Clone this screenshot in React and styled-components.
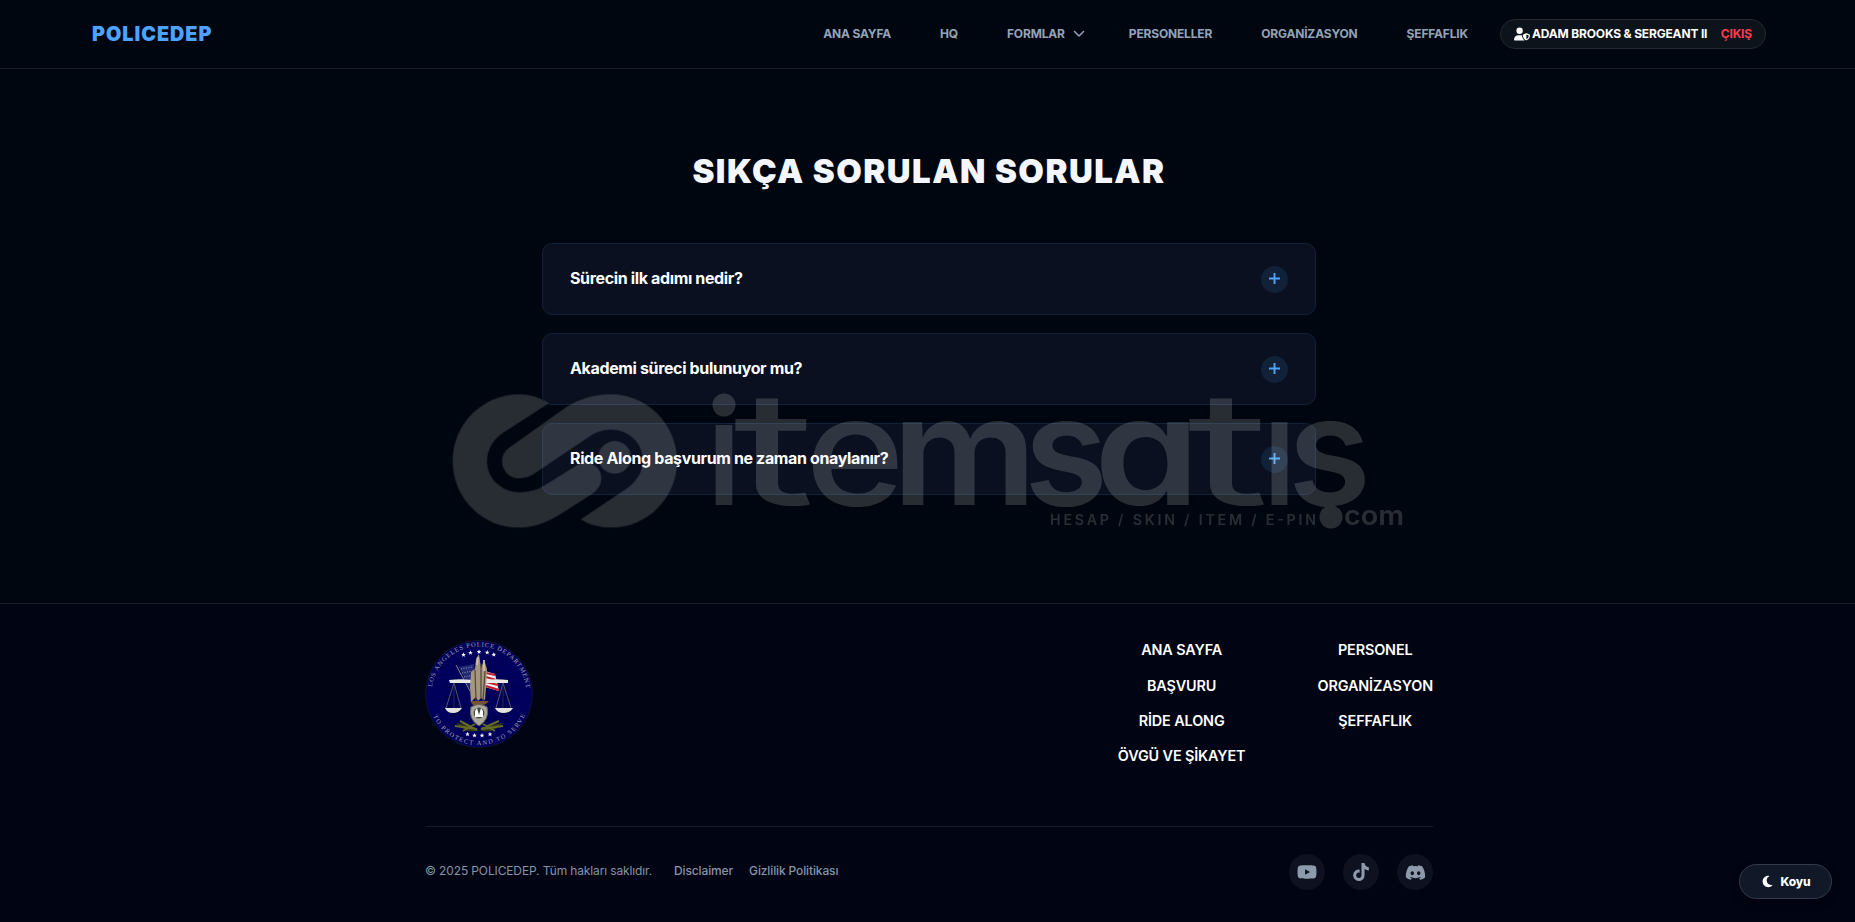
import React, { Component } from "react";
import styled, { createGlobalStyle } from "styled-components";
import {
    FaUserShield,
    FaChevronDown,
    FaYoutube,
    FaTiktok,
    FaDiscord,
    FaMoon,
} from "react-icons/fa6";

const customColors = {
    page: "#00060f",
    footer: "#000413",
    card: "#0a101f",
    blue: "#4da3ff",
    muted: "#94a3b8",
    red: "#ff3b4e",
    line: "#1a1d25",
};

const GlobalStyle = createGlobalStyle`
    * {
        box-sizing: border-box;
    }

    body {
        margin: 0;
        background: ${customColors.page};
        font-family: Inter, "Liberation Sans", sans-serif;
        overflow: hidden;
    }

    a {
        color: inherit;
        text-decoration: none;
    }
`;

const Page = styled.div`
    position: relative;
    width: 1855px;
    height: 922px;
    display: flex;
    flex-direction: column;
    overflow: hidden;
`;

const Header = styled.header`
    height: 69px;
    flex: none;
    display: flex;
    align-items: center;
    justify-content: space-between;
    padding: 0 89px 0 92px;
    border-bottom: 1px solid ${customColors.line};
`;

const Brand = styled.a`
    color: ${customColors.blue};
    font-size: 19.8px;
    font-weight: 900;
    letter-spacing: 0.98px;
    line-height: 24px;
    margin-bottom: 1px;
`;

const Nav = styled.nav`
    display: flex;
    align-items: center;
    color: ${customColors.muted};
    font-size: 12px;
    font-weight: 700;
    letter-spacing: -0.17px;
`;

const NavLink = styled.a`
    display: flex;
    align-items: center;
    gap: 8px;
    white-space: nowrap;
    padding-bottom: 2px;
    margin-right: ${(props) => props.$space || "49px"};
`;

const UserPill = styled.div`
    height: 30px;
    width: 266px;
    display: flex;
    align-items: center;
    justify-content: space-between;
    padding: 0 13px 1px;
    border: 1px solid #24282f;
    border-radius: 15px;
    background: #0d131b;
    color: white;
    white-space: nowrap;
`;

const UserName = styled.span`
    display: flex;
    align-items: center;
    gap: 2px;
`;

const Logout = styled.a`
    color: ${customColors.red};
`;

const Main = styled.main`
    height: 534px;
    flex: none;
    display: flex;
    flex-direction: column;
    align-items: center;
    padding: 82px 0 0 3px;
`;

const Title = styled.h1`
    margin: 0 0 52px;
    color: #f3f6fc;
    font-size: 33px;
    font-weight: 900;
    line-height: 40px;
    letter-spacing: 1.48px;
`;

const QuestionList = styled.div`
    width: 774px;
    display: flex;
    flex-direction: column;
    gap: 18px;
`;

const Question = styled.button`
    height: 72px;
    display: flex;
    align-items: center;
    justify-content: space-between;
    padding: 0 27px;
    border: 1px solid #10213a;
    border-radius: 10px;
    background: ${customColors.card};
    color: white;
    font-family: inherit;
    font-size: 16px;
    font-weight: 700;
    letter-spacing: -0.36px;
    cursor: pointer;
`;

const QuestionText = styled.span`
    padding-bottom: 2px;
`;

const Plus = styled.span`
    width: 27px;
    height: 27px;
    display: flex;
    align-items: center;
    justify-content: center;
    padding-bottom: 2px;
    border-radius: 50%;
    background: #102138;
`;

const Footer = styled.footer`
    flex: 1;
    display: flex;
    flex-direction: column;
    align-items: center;
    padding-left: 3px;
    border-top: 1px solid ${customColors.line};
    background: ${customColors.footer};
`;

const FooterTop = styled.div`
    width: 1008px;
    height: 222px;
    padding-top: 36px;
    display: flex;
    justify-content: space-between;
`;

const FooterColumns = styled.div`
    display: flex;
    gap: 72px;
    padding-top: 1.3px;
`;

const FooterColumn = styled.div`
    display: flex;
    flex-direction: column;
    align-items: center;
    gap: 18px;
    color: white;
    font-size: 14.4px;
    font-weight: 600;
    line-height: 17.3px;
    letter-spacing: -0.12px;
`;

const FooterBottom = styled.div`
    width: 1008px;
    padding-top: 27px;
    display: flex;
    align-items: center;
    justify-content: space-between;
    border-top: 1px solid #171a29;
`;

const Legal = styled.div`
    display: flex;
    color: #8594a8;
    font-size: 12px;
    line-height: 15px;
    letter-spacing: -0.13px;
    padding-bottom: 4px;
`;

const Copyright = styled.span`
    margin-right: 22px;
`;

const LegalLink = styled.a`
    margin-right: 16px;
    font-weight: 500;
`;

const Socials = styled.div`
    display: flex;
    gap: 18px;
`;

const SocialLink = styled.a`
    width: 36px;
    height: 36px;
    display: flex;
    align-items: center;
    justify-content: center;
    border-radius: 50%;
    background: #0e1120;
    color: #8c9aab;
`;

const ThemeButton = styled.button`
    position: absolute;
    right: 23px;
    bottom: 23px;
    width: 93px;
    height: 35px;
    display: flex;
    align-items: center;
    justify-content: center;
    gap: 7px;
    border: 1px solid #333c4a;
    border-radius: 18px;
    background: #111827;
    color: white;
    font-family: inherit;
    font-size: 12px;
    font-weight: 800;
    letter-spacing: -0.2px;
    box-shadow: 0 4px 10px rgba(0, 0, 0, 0.3);
`;

const WatermarkLayer = styled.svg`
    position: absolute;
    left: 440px;
    top: 320px;
    pointer-events: none;
`;

const navLinks = [
    { label: "ANA SAYFA" },
    { label: "HQ" },
    { label: "FORMLAR", menu: true, space: "44px" },
    { label: "PERSONELLER" },
    { label: "ORGANİZASYON" },
    { label: "ŞEFFAFLIK", space: "32px" },
];

const questions = [
    "Sürecin ilk adımı nedir?",
    "Akademi süreci bulunuyor mu?",
    "Ride Along başvurum ne zaman onaylanır?",
];

const footerLinks = [
    ["ANA SAYFA", "BAŞVURU", "RİDE ALONG", "ÖVGÜ VE ŞİKAYET"],
    ["PERSONEL", "ORGANİZASYON", "ŞEFFAFLIK"],
];

const star = "0,-2.4 0.7,-0.8 2.3,-0.7 1,0.4 1.5,2 0,1.1 -1.5,2 -1,0.4 -2.3,-0.7 -0.7,-0.8";

const topStars = [
    [38.5, 14.8],
    [45.5, 12.7],
    [54, 11.8],
    [62.2, 12.5],
    [68.8, 14.6],
];

const bottomStars = [
    [42.5, 94.2],
    [49.5, 95.5],
    [57, 95.5],
    [65, 94.2],
];

const Seal = () => (
    <svg width="108" height="108" viewBox="0 0 108 108">
        <defs>
            <path id="sealTop" d="M6.5 54 A47.5 47.5 0 0 1 101.5 54" />
            <path id="sealBottom" d="M3 54 A51 51 0 0 0 105 54" />
        </defs>
        <circle cx="54" cy="54" r="53.5" fill="#00005c" stroke="#12142f" />
        <g stroke="#000038" strokeWidth="1.5">
            {Array.from({ length: 20 }, (_, i) => (
                <path
                    key={i}
                    d="M54 23 L54 35"
                    transform={`rotate(${i * 18} 54 57)`}
                />
            ))}
        </g>
        <g fill="#a9a6b2" fontFamily="Liberation Serif, serif" fontSize="6.4">
            <text>
                <textPath
                    href="#sealTop"
                    startOffset="7"
                    textLength="136"
                    lengthAdjust="spacing"
                >
                    LOS ANGELES POLICE DEPARTMENT
                </textPath>
            </text>
            <text>
                <textPath
                    href="#sealBottom"
                    startOffset="23"
                    textLength="115"
                    lengthAdjust="spacing"
                >
                    TO PROTECT AND TO SERVE
                </textPath>
            </text>
        </g>
        <g fill="#f1f1f6">
            {[...topStars, ...bottomStars].map(([x, y]) => (
                <polygon
                    key={`${x}-${y}`}
                    points={star}
                    transform={`translate(${x} ${y})`}
                />
            ))}
        </g>
        <path d="M31 25 L45 51" stroke="#9a9590" strokeWidth="0.9" />
        <path d="M34 27 L49 24 L51 43 L44 48 Z" fill="#232a75" />
        <path
            d="M36 29 L47 27 M37 33 L48 31 M39 37 L49 35 M41 42 L49 40"
            stroke="#9ca1c9"
            strokeWidth="0.9"
            strokeDasharray="1 1.5"
        />
        <path d="M60 31 L70 34 L74 51 L60 47 Z" fill="#eee" />
        <path
            d="M61 33 L70 35 M61 37 L71 40 M61 42 L73 45 M61 46 L74 50"
            stroke="#c61d32"
            strokeWidth="2"
        />
        <path
            d="M24 40 Q39 38 54 41 Q68 38 83 40 L83 43 L58 43 L54 45 L48 43 L25 43 Z"
            fill="#e9e9e7"
        />
        <path
            d="M29 43 L21 68 M29 43 L36 68 M78 43 L71 68 M78 43 L86 68"
            stroke="#696d68"
            strokeWidth="0.8"
            fill="none"
        />
        <path d="M29 43 V69 M78 43 V69" stroke="#363955" strokeWidth="0.7" />
        <path
            d="M20 68 H37 Q34 73 28 73 Q22 73 20 68 Z M70 68 H88 Q85 73 79 73 Q72 73 70 68 Z"
            fill="#e2e3dc"
        />
        <path
            d="M46 32 L50 29 L51 19 L54 14 L56 28 L59 20 L62 29 L61 47 L60 60 L56 58 L53 61 L51 57 L46 62 L45 48 Z"
            fill="#a6967c"
        />
        <path
            d="M50 30 L51 61 M56 24 L56 59 M60 31 L58 61"
            stroke="#514839"
            strokeWidth="1.2"
        />
        <path
            d="M52 25 L53 17 M59 31 V20"
            stroke="#d0c2a6"
            strokeWidth="1.7"
        />
        <path d="M45 61 L64 61 L61 64 L55 66 L48 65 Z" fill="#735236" />
        <path
            d="M46 67 Q54 62 62 67 Q65 79 54 86 Q43 79 46 67 Z"
            fill="#aaa897"
            stroke="#656553"
        />
        <circle cx="54" cy="73" r="5.4" fill="#444845" />
        <path
            d="M50 77 V71 L52 68 L54 75 L56 68 L58 71 V77 Z"
            fill="#fff"
        />
        <path
            d="M31 83 Q44 84 54 91 Q65 84 78 83 Q66 95 54 90 Q43 95 31 83 Z"
            fill="#343b13"
        />
        <path
            d="M30 86 L52 89 M35 81 L52 90 M56 89 L78 86 M56 89 L74 81 M38 91 L50 84 M58 84 L70 91"
            stroke="#656b25"
            strokeWidth="2"
        />
    </svg>
);

// x, advance width and weight of each letter of the wordmark
const wordmark = [
    { letter: "i", x: 707, width: 34, weight: 600, size: 146 },
    { letter: "t", x: 733, width: 82, weight: 420, size: 157 },
    { letter: "e", x: 805, width: 100, weight: 550 },
    { letter: "m", x: 892, width: 145, weight: 600 },
    { letter: "s", x: 1024, width: 84, weight: 600 },
    { letter: "a", x: 1094, width: 106, weight: 600 },
    { letter: "t", x: 1187, width: 82, weight: 420, size: 157 },
    { letter: "ı", x: 1261, width: 37, weight: 550 },
    { letter: "ş", x: 1288, width: 83, weight: 600 },
];

const Watermark = () => (
    <WatermarkLayer width="980" height="260" viewBox="440 320 980 260">
        <clipPath id="wordmarkClip">
            <rect x="700" y="380" width="700" height="127" />
        </clipPath>
        <g fill="white" opacity="0.16">
            <g transform="translate(440 370) scale(0.33333)">
                <path d="M326 100 Q288 73 238 73 C126 73 38 163 38 273 C38 383 126 473 238 473 C288 473 335 450 374 424 L450 376 Q484 355 484 325 C484 294 456 273 424 278 L315 345 Q281 367 238 367 C185 367 141 325 141 275 C141 236 162 207 190 188 Z" />
                <path d="M208 233 L362 123 Q430 73 512 73 C622 73 711 163 711 273 C711 383 622 473 512 473 Q462 473 422 448 L552 361 Q608 325 608 270 C608 218 565 179 512 179 Q477 179 449 199 L276 315 Q258 325 238 325 C209 325 186 302 186 273 Q186 248 208 233 Z" />
                <circle cx="524" cy="262" r="49" />
            </g>
            <circle cx="724" cy="405" r="11.5" />
            <text
                y="504.5"
                fontFamily="Inter, sans-serif"
                fontSize="152"
                clipPath="url(#wordmarkClip)"
                style={{ fontFeatureSettings: '"cv11"' }}
            >
                {wordmark.map(({ letter, x, width, weight, size }) => (
                    <tspan
                        key={x}
                        x={x}
                        textLength={width}
                        lengthAdjust="spacingAndGlyphs"
                        fontWeight={weight}
                        fontSize={size}
                    >
                        {letter}
                    </tspan>
                ))}
            </text>
            <circle cx="1331" cy="517" r="11.5" />
            <text
                x="1344"
                y="525"
                fontFamily="Inter, sans-serif"
                fontSize="27"
                fontWeight="600"
                textLength="60"
                lengthAdjust="spacingAndGlyphs"
            >
                com
            </text>
            <text
                x="1050"
                y="525"
                fontFamily="Inter, sans-serif"
                fontSize="14.2"
                fontWeight="600"
                textLength="266"
            >
                HESAP / SKIN / ITEM / E-PIN
            </text>
        </g>
    </WatermarkLayer>
);

class App extends Component {
    render() {
        return (
            <Page>
                <GlobalStyle />
                <Header>
                    <Brand href="#">POLICEDEP</Brand>
                    <Nav>
                        {navLinks.map((link) => (
                            <NavLink
                                key={link.label}
                                href="#"
                                $space={link.space}
                            >
                                {link.label}
                                {link.menu && <FaChevronDown size={12} />}
                            </NavLink>
                        ))}
                        <UserPill>
                            <UserName>
                                <FaUserShield size={16} />
                                ADAM BROOKS &amp; SERGEANT II
                            </UserName>
                            <Logout href="#">ÇIKIŞ</Logout>
                        </UserPill>
                    </Nav>
                </Header>

                <Main>
                    <Title>SIKÇA SORULAN SORULAR</Title>
                    <QuestionList>
                        {questions.map((question) => (
                            <Question key={question}>
                                <QuestionText>{question}</QuestionText>
                                <Plus>
                                    <svg width="11" height="11">
                                        <path
                                            d="M5.5 0 V11 M0 5.5 H11"
                                            stroke={customColors.blue}
                                            strokeWidth="1.9"
                                        />
                                    </svg>
                                </Plus>
                            </Question>
                        ))}
                    </QuestionList>
                </Main>

                <Footer>
                    <FooterTop>
                        <Seal />
                        <FooterColumns>
                            {footerLinks.map((column) => (
                                <FooterColumn key={column[0]}>
                                    {column.map((label) => (
                                        <a key={label} href="#">
                                            {label}
                                        </a>
                                    ))}
                                </FooterColumn>
                            ))}
                        </FooterColumns>
                    </FooterTop>
                    <FooterBottom>
                        <Legal>
                            <Copyright>
                                © 2025 POLICEDEP. Tüm hakları saklıdır.
                            </Copyright>
                            <LegalLink href="#">Disclaimer</LegalLink>
                            <LegalLink href="#">Gizlilik Politikası</LegalLink>
                        </Legal>
                        <Socials>
                            <SocialLink href="#">
                                <FaYoutube size={20} />
                            </SocialLink>
                            <SocialLink href="#">
                                <FaTiktok size={18} />
                            </SocialLink>
                            <SocialLink href="#">
                                <FaDiscord size={21} />
                            </SocialLink>
                        </Socials>
                    </FooterBottom>
                </Footer>

                <ThemeButton>
                    <FaMoon size={13} />
                    Koyu
                </ThemeButton>
                <Watermark />
            </Page>
        );
    }
}

export default App;
